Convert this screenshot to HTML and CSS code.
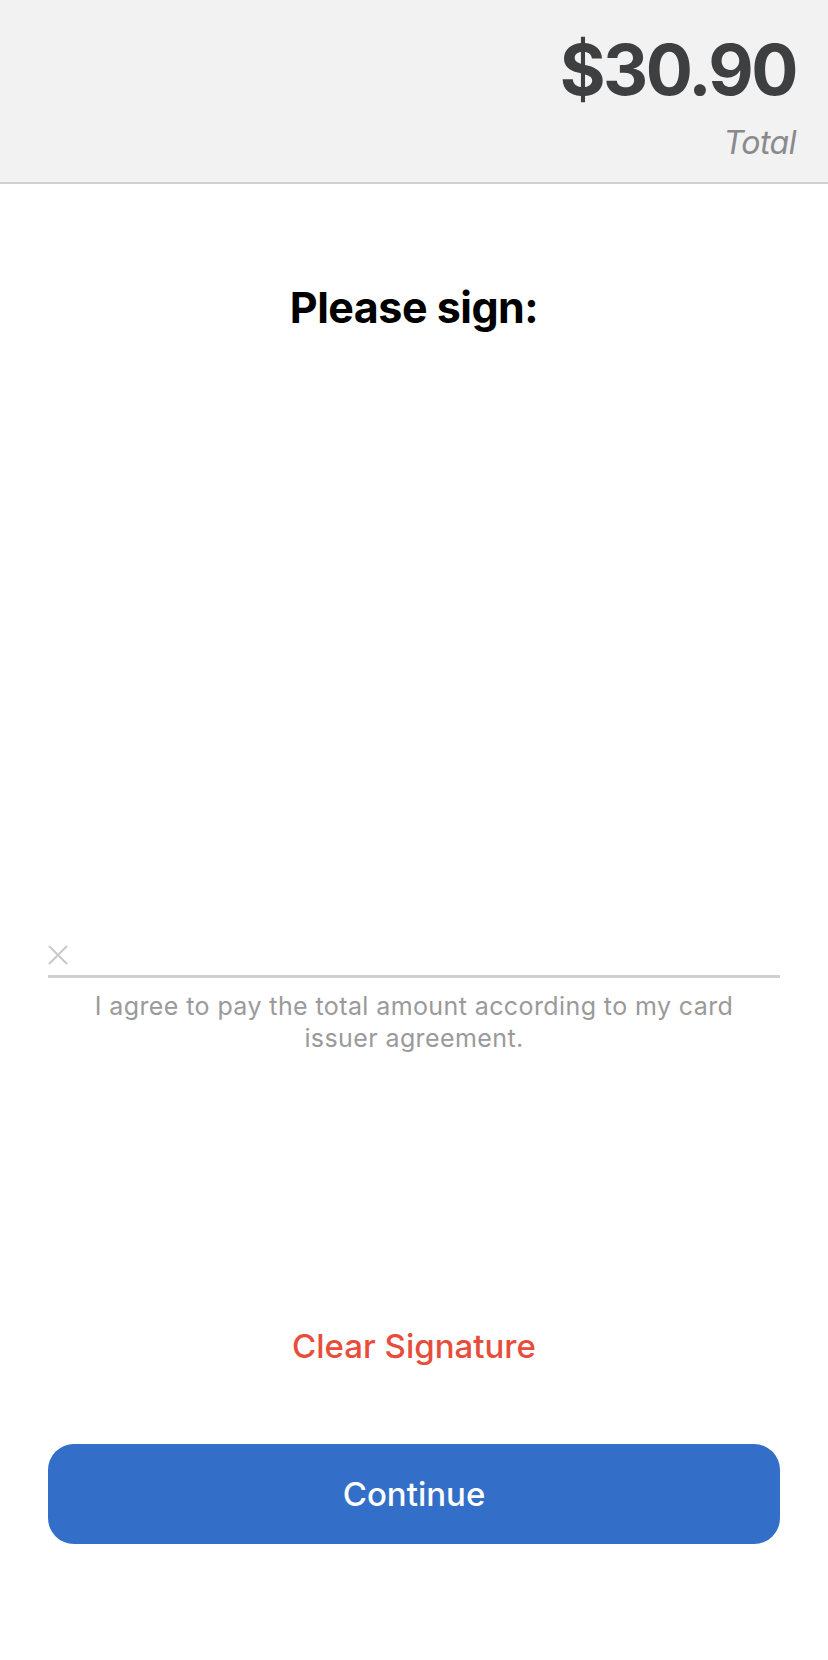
FILE: index.html
```html
<!DOCTYPE html>
<html lang="en">
<head>
<meta charset="utf-8">
<title>Please sign</title>
<link rel="stylesheet" href="styles.css">
</head>
<body>
<div class="screen">
  <header class="total-bar">
    <div class="amount">$30.90</div>
    <div class="amount-label">Total</div>
  </header>
  <main class="content">
    <h1 class="title">Please sign:</h1>
    <div class="sign-pad">
      <svg class="sign-x" width="20" height="20" viewBox="0 0 20 20" aria-hidden="true">
        <path d="M1.5 1.5 L18.5 18.5 M18.5 1.5 L1.5 18.5" stroke="#c9c9c9" stroke-width="2" fill="none" stroke-linecap="round"/>
      </svg>
    </div>
    <p class="agreement">I agree to pay the total amount according to my card issuer agreement.</p>
    <button class="clear-btn" type="button">Clear Signature</button>
    <button class="continue-btn" type="button">Continue</button>
  </main>
</div>
</body>
</html>
```
FILE: styles.css
```css
* { box-sizing: border-box; }
html, body { margin: 0; padding: 0; background: #ffffff; }
body { font-family: Inter, "Noto Sans", "Liberation Sans", sans-serif; }

.screen {
  width: 828px;
  height: 1660px;
  display: flex;
  flex-direction: column;
  background: #ffffff;
}

.total-bar {
  height: 184px;
  background: #f2f2f2;
  border-bottom: 2px solid #d0d0d0;
  padding: 30px 32px 0 0;
  text-align: right;
}
.amount {
  font-size: 70px;
  line-height: 80px;
  font-weight: 700;
  color: #3e3f41;
  letter-spacing: -2.5px;
}
.amount-label {
  margin-top: 13px;
  font-size: 32px;
  line-height: 40px;
  font-style: italic;
  color: #8a8a8e;
  letter-spacing: -0.5px;
}

.content {
  display: flex;
  flex-direction: column;
  align-items: center;
  padding: 0 48px;
}
.title {
  margin: 97px 0 0;
  font-size: 43px;
  line-height: 52px;
  font-weight: 700;
  color: #000000;
  letter-spacing: -0.5px;
}
.sign-pad {
  align-self: stretch;
  height: 645px;
  display: flex;
  flex-direction: column;
  justify-content: flex-end;
  padding-bottom: 10px;
  border-bottom: 3px solid #d0d0d0;
}
.sign-x { display: block; }

.agreement {
  margin: 12px 0 0;
  width: 700px;
  text-align: center;
  font-size: 25px;
  line-height: 32px;
  letter-spacing: 0.4px;
  color: #9a9a9a;
}

.clear-btn {
  margin-top: 272px;
  padding: 0;
  border: 0;
  background: transparent;
  font-family: inherit;
  font-size: 33px;
  line-height: 40px;
  font-weight: 500;
  color: #e84d3c;
}

.continue-btn {
  margin-top: 78px;
  align-self: stretch;
  height: 100px;
  border: 0;
  border-radius: 26px;
  background: #336fc8;
  color: #ffffff;
  font-family: inherit;
  font-size: 33px;
  font-weight: 500;
}
```
